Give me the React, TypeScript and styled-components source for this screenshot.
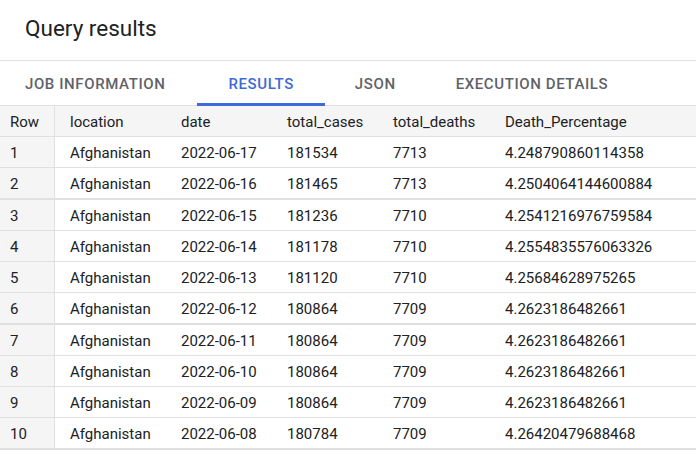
import React from "react";
import styled, { createGlobalStyle, css } from "styled-components";

const Global = createGlobalStyle`
  html, body { margin: 0; padding: 0; background: #fff; }
  body { font-family: Roboto, "Noto Sans", Arial, sans-serif; color: #202124; }
  * { box-sizing: border-box; }
`;

const Page = styled.div`
  width: 696px;
  height: 454px;
  overflow: hidden;
  display: flex;
  flex-direction: column;
`;

const TitleBar = styled.div`
  height: 61px;
  border-bottom: 1px solid #e0e0e0;
  display: flex;
  align-items: center;
  padding-left: 25px;
  padding-bottom: 4px;
`;

const Title = styled.h1`
  margin: 0;
  font-size: 22.5px;
  font-weight: 400;
  color: #202124;
`;

const TabBar = styled.div`
  height: 45px;
  display: flex;
  border-bottom: 1px solid #e0e0e0;
`;

const Tab = styled.div<{ $active?: boolean }>`
  position: relative;
  display: flex;
  align-items: center;
  padding: 1px 30px 0;
  font-size: 15px;
  font-weight: 500;
  letter-spacing: 0.6px;
  text-transform: uppercase;
  color: ${(p) => (p.$active ? "#3f6ad8" : "#5f6368")};
  &:first-child { padding-left: 25px; padding-right: 32px; }
  ${(p) =>
    p.$active &&
    css`
      padding: 1px 31px 0;
      &::after {
        content: "";
        position: absolute;
        left: 0;
        right: 0;
        bottom: -1px;
        height: 3px;
        background: #3f6ad8;
      }
    `}
`;

const Table = styled.div`
  display: flex;
  flex-direction: column;
`;

const Row = styled.div<{ $thick?: boolean; $head?: boolean }>`
  display: grid;
  grid-template-columns: 55px 111px 106px 106px 112px 1fr;
  height: ${(p) => (p.$thick ? 32 : 31)}px;
  border-bottom: ${(p) => (p.$thick ? 2 : 1)}px solid #e0e0e0;
  background: ${(p) => (p.$head ? "#f5f5f5" : "#fff")};
  font-size: 15px;
  color: #202124;
`;

const Cell = styled.div`
  display: flex;
  align-items: center;
  padding-left: 15px;
  padding-top: 1px;
  white-space: nowrap;
`;

const RowNum = styled(Cell)`
  background: #f5f5f5;
  border-right: 1px solid #e0e0e0;
  padding-left: 10px;
`;

const headers = ["location", "date", "total_cases", "total_deaths", "Death_Percentage"];

const data: [string, string, string, string, string][] = [
  ["Afghanistan", "2022-06-17", "181534", "7713", "4.248790860114358"],
  ["Afghanistan", "2022-06-16", "181465", "7713", "4.2504064144600884"],
  ["Afghanistan", "2022-06-15", "181236", "7710", "4.2541216976759584"],
  ["Afghanistan", "2022-06-14", "181178", "7710", "4.2554835576063326"],
  ["Afghanistan", "2022-06-13", "181120", "7710", "4.25684628975265"],
  ["Afghanistan", "2022-06-12", "180864", "7709", "4.2623186482661"],
  ["Afghanistan", "2022-06-11", "180864", "7709", "4.2623186482661"],
  ["Afghanistan", "2022-06-10", "180864", "7709", "4.2623186482661"],
  ["Afghanistan", "2022-06-09", "180864", "7709", "4.2623186482661"],
  ["Afghanistan", "2022-06-08", "180784", "7709", "4.26420479688468"],
];

export default function App() {
  return (
    <Page>
      <Global />
      <TitleBar>
        <Title>Query results</Title>
      </TitleBar>
      <TabBar>
        <Tab>Job information</Tab>
        <Tab $active>Results</Tab>
        <Tab>JSON</Tab>
        <Tab>Execution details</Tab>
      </TabBar>
      <Table>
        <Row $head>
          <RowNum>Row</RowNum>
          {headers.map((h) => (
            <Cell key={h}>{h}</Cell>
          ))}
        </Row>
        {data.map((r, i) => (
          <Row key={i} $thick={i === 1 || i === 5 || i === 9}>
            <RowNum>{i + 1}</RowNum>
            {r.map((c, j) => (
              <Cell key={j}>{c}</Cell>
            ))}
          </Row>
        ))}
      </Table>
    </Page>
  );
}
